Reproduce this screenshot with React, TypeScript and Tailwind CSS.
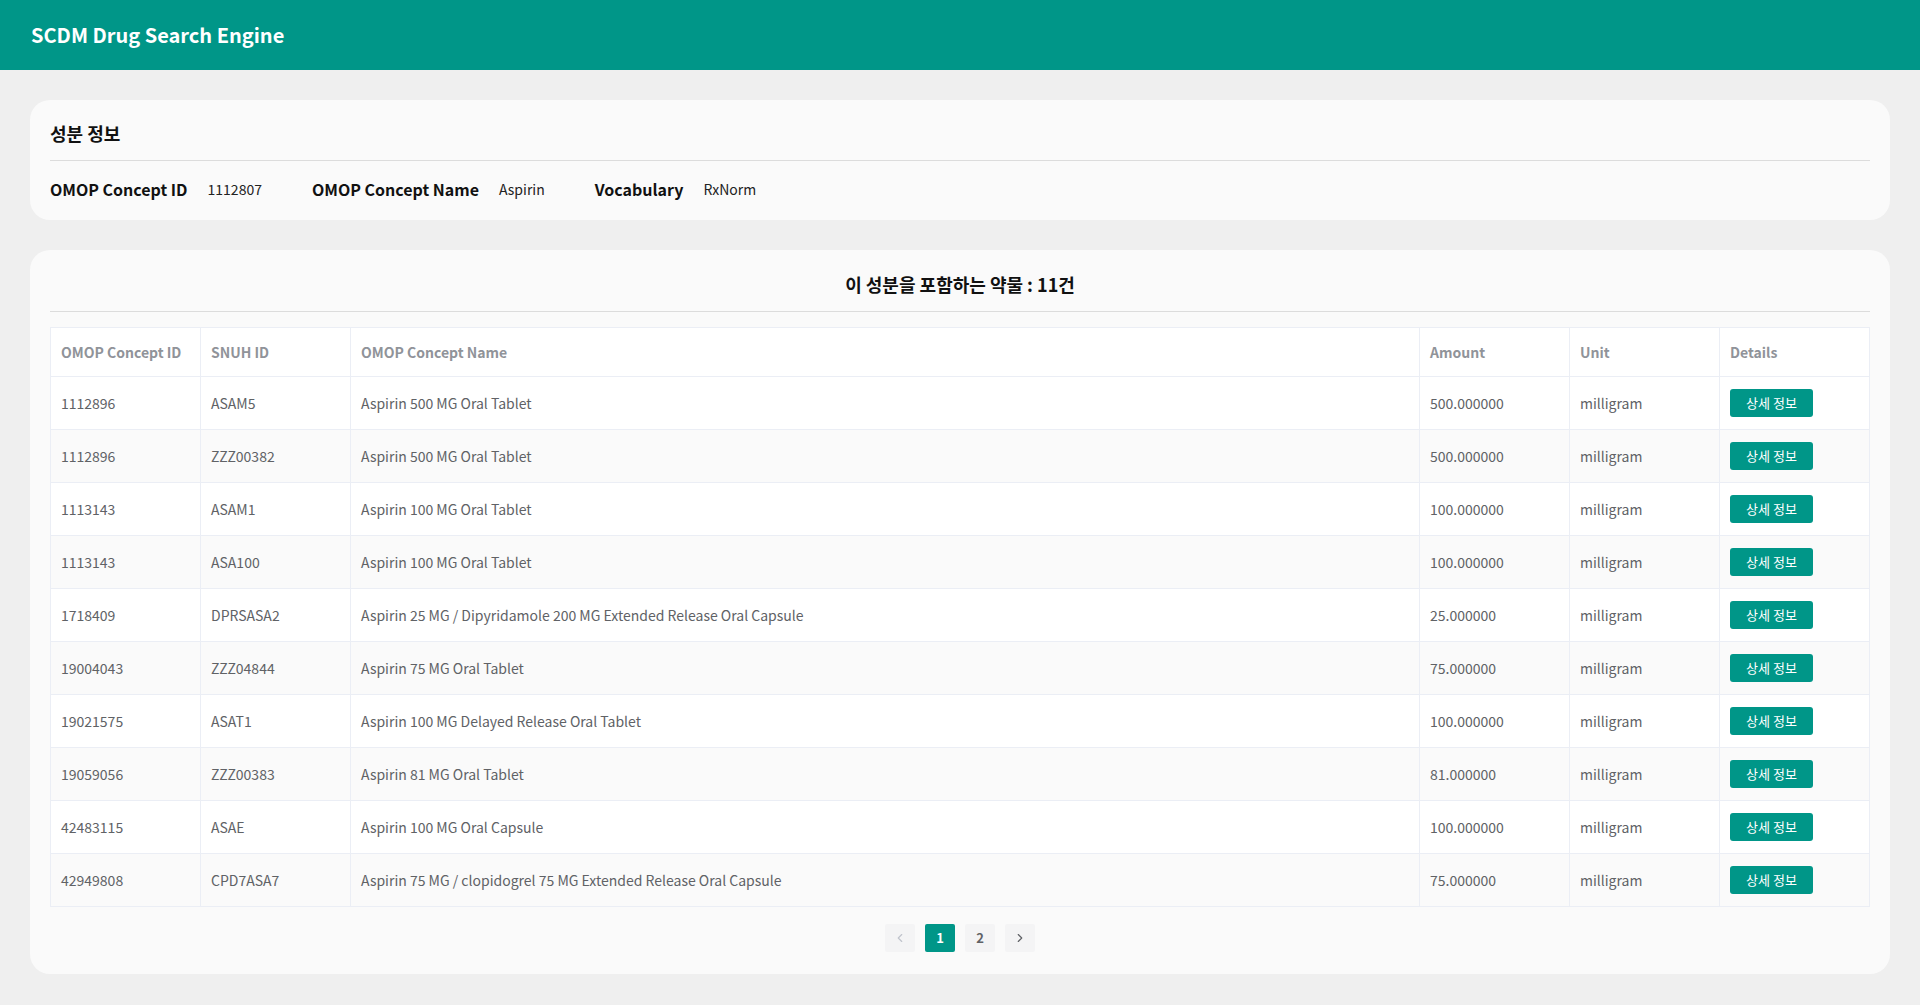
import { ChevronLeft, ChevronRight } from 'lucide-react';

interface DrugRow {
  conceptId: string;
  snuhId: string;
  name: string;
  amount: string;
  unit: string;
}

const rows: DrugRow[] = [
  { conceptId: '1112896', snuhId: 'ASAM5', name: 'Aspirin 500 MG Oral Tablet', amount: '500.000000', unit: 'milligram' },
  { conceptId: '1112896', snuhId: 'ZZZ00382', name: 'Aspirin 500 MG Oral Tablet', amount: '500.000000', unit: 'milligram' },
  { conceptId: '1113143', snuhId: 'ASAM1', name: 'Aspirin 100 MG Oral Tablet', amount: '100.000000', unit: 'milligram' },
  { conceptId: '1113143', snuhId: 'ASA100', name: 'Aspirin 100 MG Oral Tablet', amount: '100.000000', unit: 'milligram' },
  { conceptId: '1718409', snuhId: 'DPRSASA2', name: 'Aspirin 25 MG / Dipyridamole 200 MG Extended Release Oral Capsule', amount: '25.000000', unit: 'milligram' },
  { conceptId: '19004043', snuhId: 'ZZZ04844', name: 'Aspirin 75 MG Oral Tablet', amount: '75.000000', unit: 'milligram' },
  { conceptId: '19021575', snuhId: 'ASAT1', name: 'Aspirin 100 MG Delayed Release Oral Tablet', amount: '100.000000', unit: 'milligram' },
  { conceptId: '19059056', snuhId: 'ZZZ00383', name: 'Aspirin 81 MG Oral Tablet', amount: '81.000000', unit: 'milligram' },
  { conceptId: '42483115', snuhId: 'ASAE', name: 'Aspirin 100 MG Oral Capsule', amount: '100.000000', unit: 'milligram' },
  { conceptId: '42949808', snuhId: 'CPD7ASA7', name: 'Aspirin 75 MG / clopidogrel 75 MG Extended Release Oral Capsule', amount: '75.000000', unit: 'milligram' },
];

const headers = ['OMOP Concept ID', 'SNUH ID', 'OMOP Concept Name', 'Amount', 'Unit', 'Details'];

export default function App() {
  return (
    <div className="min-h-[1005px] bg-[#efefef] font-['Noto_Sans_CJK_KR','Noto_Sans',sans-serif]">
      <header className="flex h-[70px] items-center bg-[#009688] px-[31px]">
        <h1 className="text-[20px] font-bold text-white">SCDM Drug Search Engine</h1>
      </header>

      <main className="px-[30px] pt-[30px] pb-[30px]">
        <section className="rounded-[20px] bg-[#fafafa] px-5 pt-[20px] pb-[18px]">
          <h2 className="pb-[14px] text-[18px] font-bold leading-[26px] text-[#111]">성분 정보</h2>
          <div className="border-t border-[#dcdcdc]" />
          <div className="flex items-center pt-[15px] leading-[26px]">
            <InfoItem label="OMOP Concept ID" value="1112807" />
            <InfoItem label="OMOP Concept Name" value="Aspirin" />
            <InfoItem label="Vocabulary" value="RxNorm" />
          </div>
        </section>

        <section className="mt-[30px] rounded-[20px] bg-[#fafafa] px-5 pt-[21px] pb-[22px]">
          <h2 className="pb-[14px] text-center text-[18px] font-bold leading-[26px] text-[#111]">
            이 성분을 포함하는 약물 : 11건
          </h2>
          <div className="border-t border-[#dcdcdc]" />

          <table className="mt-[15px] w-full table-fixed border-collapse border border-[#ebeef5] text-[14px]">
            <colgroup>
              <col className="w-[150px]" />
              <col className="w-[150px]" />
              <col />
              <col className="w-[150px]" />
              <col className="w-[150px]" />
              <col className="w-[150px]" />
            </colgroup>
            <thead>
              <tr className="h-[49px] bg-white">
                {headers.map((h) => (
                  <th key={h} className="border border-[#ebeef5] px-[10px] text-left font-bold text-[#909399]">
                    {h}
                  </th>
                ))}
              </tr>
            </thead>
            <tbody>
              {rows.map((row, index) => (
                <tr key={index} className={`h-[53px] ${index % 2 === 1 ? 'bg-[#fafafa]' : 'bg-white'}`}>
                  <td className="border border-[#ebeef5] px-[10px] text-[#606266]">{row.conceptId}</td>
                  <td className="border border-[#ebeef5] px-[10px] text-[#606266]">{row.snuhId}</td>
                  <td className="border border-[#ebeef5] px-[10px] text-[#606266]">{row.name}</td>
                  <td className="border border-[#ebeef5] px-[10px] text-[#606266]">{row.amount}</td>
                  <td className="border border-[#ebeef5] px-[10px] text-[#606266]">{row.unit}</td>
                  <td className="border border-[#ebeef5] px-[10px]">
                    <button className="h-[28px] w-[83px] rounded-[3px] bg-[#009688] text-[13px] text-white">
                      상세 정보
                    </button>
                  </td>
                </tr>
              ))}
            </tbody>
          </table>

          <div className="mt-[17px] flex justify-center gap-[10px]">
            <button className="flex h-[28px] w-[30px] items-center justify-center rounded-[2px] bg-[#f4f4f5] text-[#c0c4cc]">
              <ChevronLeft className="h-[14px] w-[14px]" strokeWidth={2} />
            </button>
            <button className="flex h-[28px] w-[30px] items-center justify-center rounded-[2px] bg-[#009688] text-[13px] font-bold text-white">
              1
            </button>
            <button className="flex h-[28px] w-[30px] items-center justify-center rounded-[2px] bg-[#f4f4f5] text-[13px] font-bold text-[#606266]">
              2
            </button>
            <button className="flex h-[28px] w-[30px] items-center justify-center rounded-[2px] bg-[#f4f4f5] text-[#606266]">
              <ChevronRight className="h-[14px] w-[14px]" strokeWidth={2} />
            </button>
          </div>
        </section>
      </main>
    </div>
  );
}

function InfoItem({ label, value }: { label: string; value: string }) {
  return (
    <div className="mr-[50px] flex items-center">
      <span className="text-[16px] font-bold text-[#111]">{label}</span>
      <span className="ml-[20px] text-[14px] text-[#222]">{value}</span>
    </div>
  );
}
